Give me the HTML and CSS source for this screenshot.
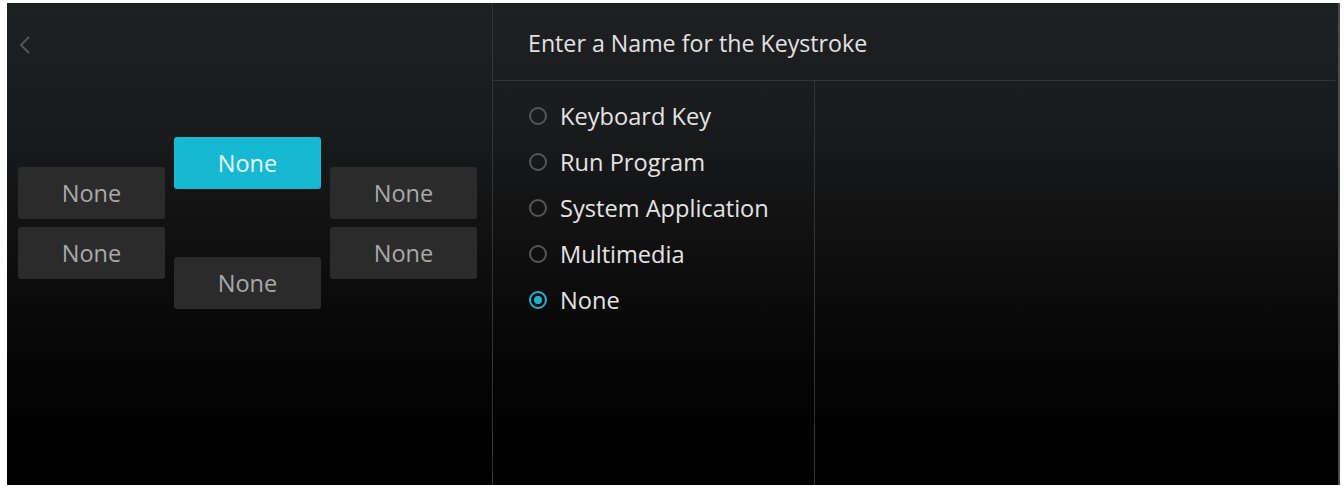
FILE: index.html
```html
<!DOCTYPE html>
<html lang="en">
<head>
<meta charset="utf-8">
<title>Keystroke</title>
<link rel="stylesheet" href="styles.css">
</head>
<body>
<div class="frame">
  <aside class="left">
    <div class="back">
      <svg width="13" height="20" viewBox="0 0 13 20"><polyline points="11,2 3,10 11,18" fill="none" stroke="#555658" stroke-width="2"/></svg>
    </div>
    <div class="pad">
      <div class="col side">
        <div class="key">None</div>
        <div class="key">None</div>
      </div>
      <div class="col mid">
        <div class="key active">None</div>
        <div class="key">None</div>
      </div>
      <div class="col side">
        <div class="key">None</div>
        <div class="key">None</div>
      </div>
    </div>
  </aside>
  <section class="right">
    <header class="title">Enter a Name for the Keystroke</header>
    <div class="body">
      <ul class="options">
        <li class="option"><span class="radio"></span>Keyboard Key</li>
        <li class="option"><span class="radio"></span>Run Program</li>
        <li class="option"><span class="radio"></span>System Application</li>
        <li class="option"><span class="radio"></span>Multimedia</li>
        <li class="option"><span class="radio checked"></span>None</li>
      </ul>
      <div class="detail"></div>
    </div>
  </section>
</div>
</body>
</html>
```
FILE: styles.css
```css
html, body {
  margin: 0;
  padding: 0;
  background: #ffffff;
}
body {
  width: 1343px;
  height: 487px;
  overflow: hidden;
  font-family: "Open Sans", "Noto Sans", sans-serif;
}
.frame {
  margin: 3px 0 0 7px;
  width: 1333px;
  height: 482px;
  display: flex;
  background: linear-gradient(to bottom, #1f2022 0%, #1a1b1c 25%, #101011 50%, #050505 75%, #000 100%);
  border-right: 2px solid #4a4a4a;
  box-sizing: border-box;
}
.left {
  width: 486px;
  flex: none;
  box-sizing: border-box;
  border-right: 1px solid #343434;
  padding-left: 11px;
}
.back {
  margin-top: 32px;
  height: 20px;
  display: flex;
  align-items: center;
}
.back svg { display: block; }
.pad {
  margin-top: 82px;
  display: flex;
  gap: 9px;
  align-items: flex-start;
}
.col {
  display: flex;
  flex-direction: column;
  width: 147px;
}
.col.side {
  padding-top: 30px;
  gap: 8px;
}
.col.mid {
  gap: 68px;
}
.key {
  height: 52px;
  border-radius: 3px;
  background: #2b2b2c;
  color: #a9a9a9;
  font-size: 23.5px;
  display: flex;
  align-items: center;
  justify-content: center;
}
.key.active {
  background: #17b8d2;
  color: #e8f8fb;
}
.right {
  flex: 1;
  display: flex;
  flex-direction: column;
}
.title {
  height: 78px;
  box-sizing: border-box;
  border-bottom: 1px solid #343434;
  margin-right: 3px;
  padding: 3px 0 0 35px;
  display: flex;
  align-items: center;
  color: #e2e2e2;
  font-size: 23.2px;
  font-weight: 500;
}
.body {
  flex: 1;
  display: flex;
}
.options {
  list-style: none;
  margin: 0;
  padding: 12px 0 0 36px;
  width: 322px;
  box-sizing: border-box;
  border-right: 1px solid #343434;
}
.option {
  height: 46px;
  display: flex;
  align-items: center;
  gap: 13px;
  color: #e4e4e4;
  font-size: 23.6px;
  font-weight: 500;
}
.radio {
  width: 18px;
  height: 18px;
  box-sizing: border-box;
  border: 2px solid #565656;
  border-radius: 50%;
  flex: none;
  display: flex;
  align-items: center;
  justify-content: center;
}
.radio.checked {
  border-color: #1ab4cd;
}
.radio.checked::after {
  content: "";
  width: 8px;
  height: 8px;
  border-radius: 50%;
  background: #1ab4cd;
}
.detail {
  flex: 1;
}
```
